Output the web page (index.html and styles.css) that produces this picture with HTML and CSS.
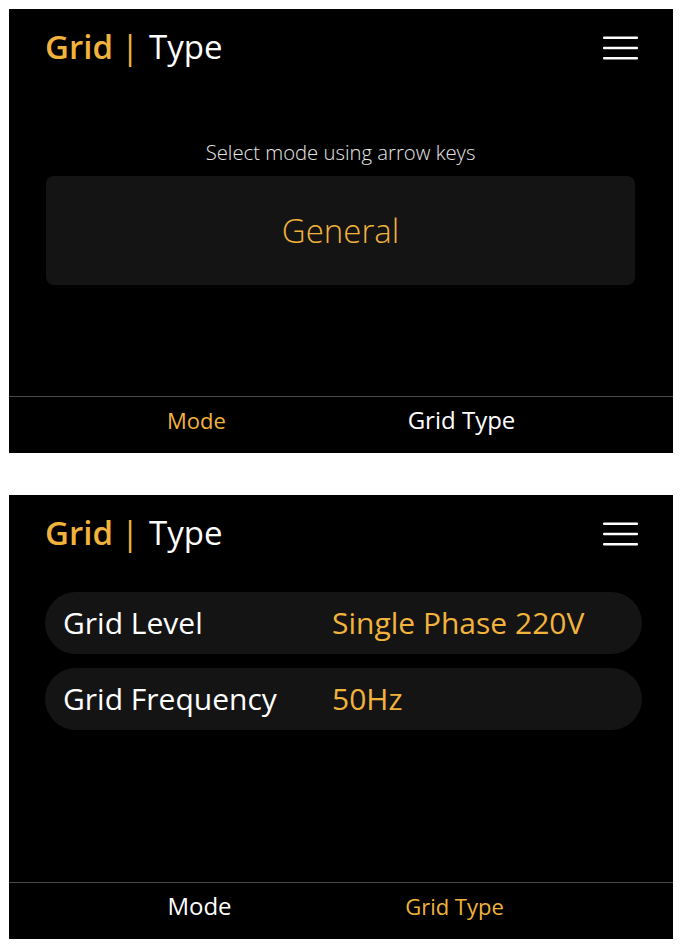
FILE: index.html
```html
<!DOCTYPE html>
<html lang="en">
<head>
<meta charset="utf-8">
<title>Grid Type</title>
<link rel="stylesheet" href="styles.css">
</head>
<body>
  <section class="panel">
    <header class="header">
      <h1 class="title"><span class="title-accent">Grid</span><span class="title-sep">|</span><span class="title-main">Type</span></h1>
      <svg class="menu" width="35" height="24" viewBox="0 0 35 24" aria-hidden="true">
        <rect x="0" y="0.5" width="35" height="2.6" rx="1" fill="#fff"/>
        <rect x="0" y="10.7" width="35" height="2.6" rx="1" fill="#fff"/>
        <rect x="0" y="20.9" width="35" height="2.6" rx="1" fill="#fff"/>
      </svg>
    </header>
    <main class="content content-select">
      <p class="hint">Select mode using arrow keys</p>
      <div class="select-box">General</div>
    </main>
    <footer class="tabs tabs-one">
      <span class="tab tab-active">Mode</span>
      <span class="tab">Grid Type</span>
    </footer>
  </section>

  <section class="panel">
    <header class="header">
      <h1 class="title"><span class="title-accent">Grid</span><span class="title-sep">|</span><span class="title-main">Type</span></h1>
      <svg class="menu" width="35" height="24" viewBox="0 0 35 24" aria-hidden="true">
        <rect x="0" y="0.5" width="35" height="2.6" rx="1" fill="#fff"/>
        <rect x="0" y="10.7" width="35" height="2.6" rx="1" fill="#fff"/>
        <rect x="0" y="20.9" width="35" height="2.6" rx="1" fill="#fff"/>
      </svg>
    </header>
    <main class="content content-list">
      <div class="row"><span class="row-label">Grid Level</span><span class="row-value">Single Phase 220V</span></div>
      <div class="row"><span class="row-label">Grid Frequency</span><span class="row-value">50Hz</span></div>
    </main>
    <footer class="tabs tabs-two">
      <span class="tab">Mode</span>
      <span class="tab tab-active">Grid Type</span>
    </footer>
  </section>
</body>
</html>
```
FILE: styles.css
```css
* { box-sizing: border-box; }

html, body { background: #ffffff; }

body {
  margin: 9px;
  font-family: "Open Sans", "Noto Sans", "Liberation Sans", sans-serif;
  color: #ffffff;
}

.panel {
  width: 664px;
  height: 444px;
  background: #000000;
  display: flex;
  flex-direction: column;
  margin-bottom: 42px;
}

.header {
  height: 77px;
  flex: none;
  display: flex;
  align-items: center;
  justify-content: space-between;
  padding: 0 35px 0 36px;
}

.title {
  margin: 0 0 2px;
  font-size: 33px;
  font-weight: 400;
  line-height: 40px;
  display: flex;
  align-items: center;
}

.title-accent { color: #f2b33d; font-weight: 600; }
.title-sep { color: #f2b33d; margin: 0 10px 0 8px; }
.title-main { color: #ffffff; }

.menu { display: block; margin-top: 1px; }

.content {
  flex: 1;
}

.content-select {
  padding: 52px 38px 0 37px;
}

.hint {
  margin: 0 0 10px;
  text-align: center;
  font-size: 20.3px;
  font-weight: 300;
  line-height: 28px;
  color: #e6e6e6;
}

.select-box {
  height: 109px;
  background: #141414;
  border-radius: 8px;
  display: flex;
  align-items: center;
  justify-content: center;
  color: #f2b33d;
  font-size: 33px;
  font-weight: 300;
}

.content-list {
  padding: 20px 31px 0 36px;
  display: flex;
  flex-direction: column;
  gap: 14px;
}

.row {
  height: 62px;
  background: #141414;
  border-radius: 31px;
  display: grid;
  grid-template-columns: 269px 1fr;
  align-items: center;
  padding-left: 18px;
  font-size: 30px;
  line-height: 40px;
}

.row-label { color: #ffffff; }
.row-value { color: #f2b33d; }

.tabs {
  height: 57px;
  flex: none;
  border-top: 1px solid #4a4a4a;
  display: grid;
  align-items: center;
  justify-items: center;
  padding-bottom: 10px;
}

.tabs-one { grid-template-columns: 265px 265px; padding-left: 55px; }
.tabs-two { grid-template-columns: 255px 255px; padding-left: 63px; }

.tab {
  font-size: 24px;
  line-height: 32px;
  color: #ffffff;
}

.tab-active {
  font-size: 22px;
  color: #f2b33d;
}
```
